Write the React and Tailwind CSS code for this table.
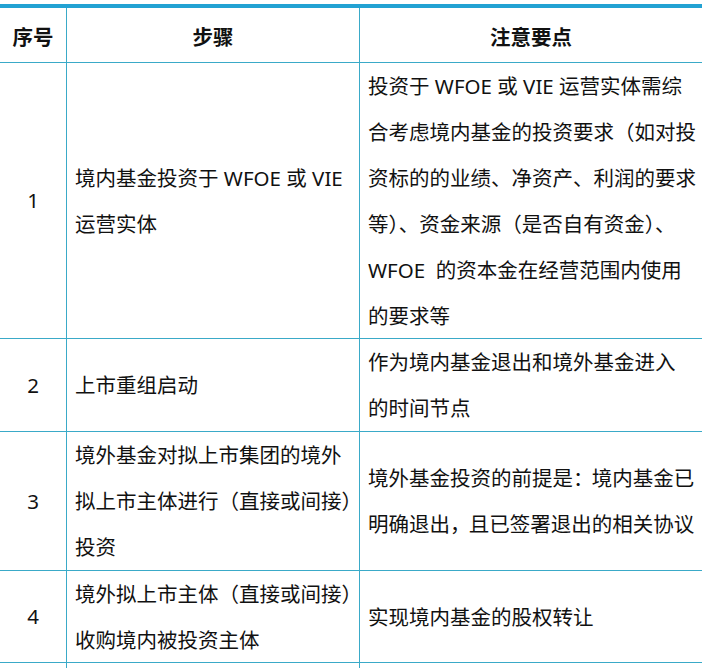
const P = ({ children, className }) => <span className={className}>{children}</span>

const rows = [
  {
    no: '1',
    h: 'h-[276px]',
    step: ['境内基金投资于 WFOE 或 VIE', '运营实体'],
    note: [
      '投资于 WFOE 或 VIE 运营实体需综',
      '合考虑境内基金的投资要求（如对投',
      '资标的的业绩、净资产、利润的要求',
      '等）、资金来源（是否自有资金）、',
      'WFOE  的资本金在经营范围内使用',
      '的要求等',
    ],
  },
  {
    no: '2',
    h: 'h-[93px]',
    step: ['上市重组启动'],
    note: ['作为境内基金退出和境外基金进入', '的时间节点'],
  },
  {
    no: '3',
    h: 'h-[139px]',
    step: [
      '境外基金对拟上市集团的境外',
      <>拟上市主体进行（直接或间接<P className="tracking-[-9px]">）</P></>,
      '投资',
    ],
    note: [
      <>境外基金投资的前提是<P className="tracking-[-7px]">：</P> 境内基金已</>,
      <>明确退出<P className="tracking-[-7px]">，</P> 且已签署退出的相关协议</>,
    ],
  },
  {
    no: '4',
    h: 'h-[92px]',
    step: [<>境外拟上市主体（直接或间接<P className="tracking-[-9px]">）</P></>, '收购境内被投资主体'],
    note: ['实现境内基金的股权转让'],
  },
]

function Lines({ items }) {
  return (
    <div className="flex flex-col">
      {items.map((t, i) => (
        <div key={i} className="whitespace-pre leading-[46px]">
          {t}
        </div>
      ))}
    </div>
  )
}

export default function App() {
  return (
    <div
      className="w-[702px] h-[668px] overflow-hidden bg-white pt-1 text-[20.5px] text-[#111]"
      style={{ fontFamily: '"Noto Sans", "Noto Sans CJK SC", sans-serif' }}
    >
      <div className="border-t-4 border-[#22a2d3]">
        {/* 表头 */}
        <div className="flex h-[55px] border-b border-[#3aaac8] font-bold">
          <div className="w-[67px] shrink-0 border-r border-[#3aaac8] flex items-center justify-center pt-1">序号</div>
          <div className="w-[293px] shrink-0 border-r border-[#3aaac8] flex items-center justify-center pt-1">步骤</div>
          <div className="flex-1 flex items-center justify-center pt-1">注意要点</div>
        </div>

        {rows.map((r) => (
          <div key={r.no} className={`flex border-b border-[#3aaac8] ${r.h}`}>
            <div className="w-[67px] shrink-0 border-r border-[#3aaac8] flex items-center justify-center">
              {r.no}
            </div>
            <div className="w-[293px] shrink-0 border-r border-[#3aaac8] flex items-center pl-2 overflow-hidden">
              <Lines items={r.step} />
            </div>
            <div className="flex-1 flex items-center pl-2 overflow-hidden">
              <Lines items={r.note} />
            </div>
          </div>
        ))}

        <div className="flex h-[30px]">
          <div className="w-[67px] shrink-0 border-r border-[#3aaac8]"></div>
          <div className="w-[293px] shrink-0 border-r border-[#3aaac8]"></div>
          <div className="flex-1"></div>
        </div>
      </div>
    </div>
  )
}
